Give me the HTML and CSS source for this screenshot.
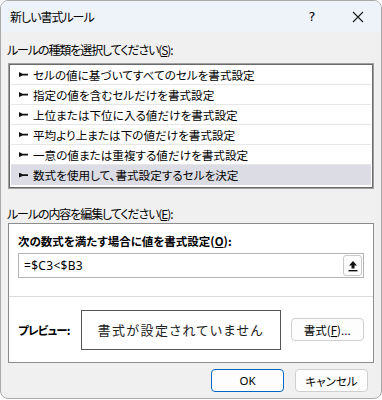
FILE: index.html
```html
<!DOCTYPE html>
<html lang="ja">
<head>
  <meta charset="UTF-8" />
  <title>新しい書式ルール</title>
  <link rel="stylesheet" href="styles.css">
</head>
<body>
  <div class="dialog">
    <div class="titlebar">
      <span class="title">新しい書式ルール</span>
      <span class="help">?</span>
      <span class="close">
        <svg width="12" height="12" viewBox="0 0 12 12"><path d="M1 1L11 11M11 1L1 11" stroke="#1a1a1a" stroke-width="1.1" fill="none"/></svg>
      </span>
    </div>

    <div class="content">
      <p class="label">ルールの種類を選択してください(<u>S</u>):</p>
      <ul class="rule-list">
        <li><span class="bullet"></span>セルの値に基づいてすべてのセルを書式設定</li>
        <li><span class="bullet"></span>指定の値を含むセルだけを書式設定</li>
        <li><span class="bullet"></span>上位または下位に入る値だけを書式設定</li>
        <li><span class="bullet"></span>平均より上または下の値だけを書式設定</li>
        <li><span class="bullet"></span>一意の値または重複する値だけを書式設定</li>
        <li class="selected"><span class="bullet"></span>数式を使用して、書式設定するセルを決定</li>
      </ul>

      <p class="label label-edit">ルールの内容を編集してください(<u>E</u>):</p>
      <div class="panel">
        <div class="panel-top">
          <p class="bold-label">次の数式を満たす場合に値を書式設定(<u>O</u>):</p>
          <div class="formula">
            <span class="formula-text">=$C3&lt;$B3</span>
            <span class="ref-btn">
              <svg width="10" height="12" viewBox="0 0 10 12"><path d="M5 1L1 5.5H3.5V8.5H6.5V5.5H9Z" fill="#111"/><rect x="0.5" y="10" width="9" height="1.4" fill="#111"/></svg>
            </span>
          </div>
        </div>
        <div class="preview-row">
          <span class="bold-label preview-label">プレビュー:</span>
          <div class="preview-box">書式が設定されていません</div>
          <button class="btn btn-format">書式(<u>F</u>)...</button>
        </div>
      </div>

      <div class="actions">
        <button class="btn btn-ok">OK</button>
        <button class="btn">キャンセル</button>
      </div>
    </div>
  </div>
</body>
</html>
```

FILE: styles.css
```css
* {
  margin: 0;
  padding: 0;
  box-sizing: border-box;
}

body {
  background: #ffffff;
  font-family: "Noto Sans CJK JP", "Noto Sans", sans-serif;
  font-size: 11.5px;
  font-feature-settings: "palt";
  color: #000;
}

.dialog {
  width: 382px;
  height: 399px;
  border: 1px solid #a9a9a9;
  border-radius: 8px;
  overflow: hidden;
  background: #f0f0f0;
}

.titlebar {
  height: 31px;
  background: #eef2f9;
  display: flex;
  align-items: center;
  padding-left: 9px;
}

.title {
  flex: 1;
  font-size: 12px;
  letter-spacing: -1px;
}

.help {
  width: 46px;
  text-align: center;
  font-family: "DejaVu Sans", sans-serif;
  font-size: 13px;
}

.close {
  width: 46px;
  display: flex;
  justify-content: center;
}

.content {
  padding: 10px 6px 0 6px;
}

.label {
  font-size: 12px;
  letter-spacing: -1.1px;
  line-height: 16px;
  margin-bottom: 5px;
}

.label-edit {
  margin-top: 17px;
  margin-bottom: 1px;
}

.rule-list {
  list-style: none;
  background: #fff;
  border: 1px solid #a0a0a0;
  box-shadow: inset 0 0 0 1px #6a6a6a;
  padding: 1px 2px 2px 2px;
  height: 126px;
  margin-left: 1px;
  margin-right: 1px;
  font-size: 11.6px;
}

.rule-list li {
  height: 20px;
  display: flex;
  align-items: center;
  padding-left: 8px;
  border-bottom: 1px solid #e6e6e6;
}

.rule-list li.selected {
  background: #dcdce4;
  border-bottom: none;
}

.bullet {
  width: 9px;
  height: 5px;
  margin-right: 5px;
  background: #111;
  clip-path: polygon(0 0, 40% 35%, 100% 35%, 100% 70%, 40% 70%, 0 100%);
}

.panel {
  background: #fff;
  border: 1px solid #8c8c8c;
  margin: 0 1px;
  height: 140px;
  display: flex;
  flex-direction: column;
}

.panel-top {
  padding: 9px 9px 0 9px;
  height: 73px;
  border-bottom: 1px solid #dcdcdc;
}

.bold-label {
  font-weight: bold;
  line-height: 16px;
}

.preview-label {
  white-space: nowrap;
  letter-spacing: -0.8px;
}

.formula {
  margin-top: 4px;
  height: 25px;
  border: 1px solid #b4b4b4;
  display: flex;
  align-items: center;
  justify-content: space-between;
  padding: 0 1px 0 5px;
}

.formula-text {
  font-family: "Noto Sans", sans-serif;
  font-size: 12px;
  letter-spacing: 0.3px;
}

.ref-btn {
  width: 19px;
  height: 21px;
  border: 1px solid #c8c8c8;
  border-radius: 3px;
  background: #fdfdfd;
  display: flex;
  align-items: center;
  justify-content: center;
}

.preview-row {
  flex: 1;
  display: flex;
  align-items: center;
  padding: 0 9px 0 9px;
}

.preview-box {
  margin-left: 11px;
  width: 200px;
  height: 40px;
  border: 1px solid #555;
  display: flex;
  align-items: center;
  justify-content: center;
  font-size: 13px;
  letter-spacing: 1.4px;
  color: #222;
}

.btn {
  font-family: inherit;
  font-size: 11.5px;
  font-feature-settings: "palt";
  width: 73px;
  height: 23px;
  background: #fdfdfd;
  border: 1px solid #cfcfcf;
  border-radius: 4px;
  color: #000;
}

.btn-format {
  margin-left: 10px;
}

.actions {
  display: flex;
  justify-content: flex-end;
  gap: 11px;
  padding: 6px 7px 0 0;
}

.btn-ok {
  border-color: #0067c0;
  font-family: "Noto Sans", sans-serif;
}
```
